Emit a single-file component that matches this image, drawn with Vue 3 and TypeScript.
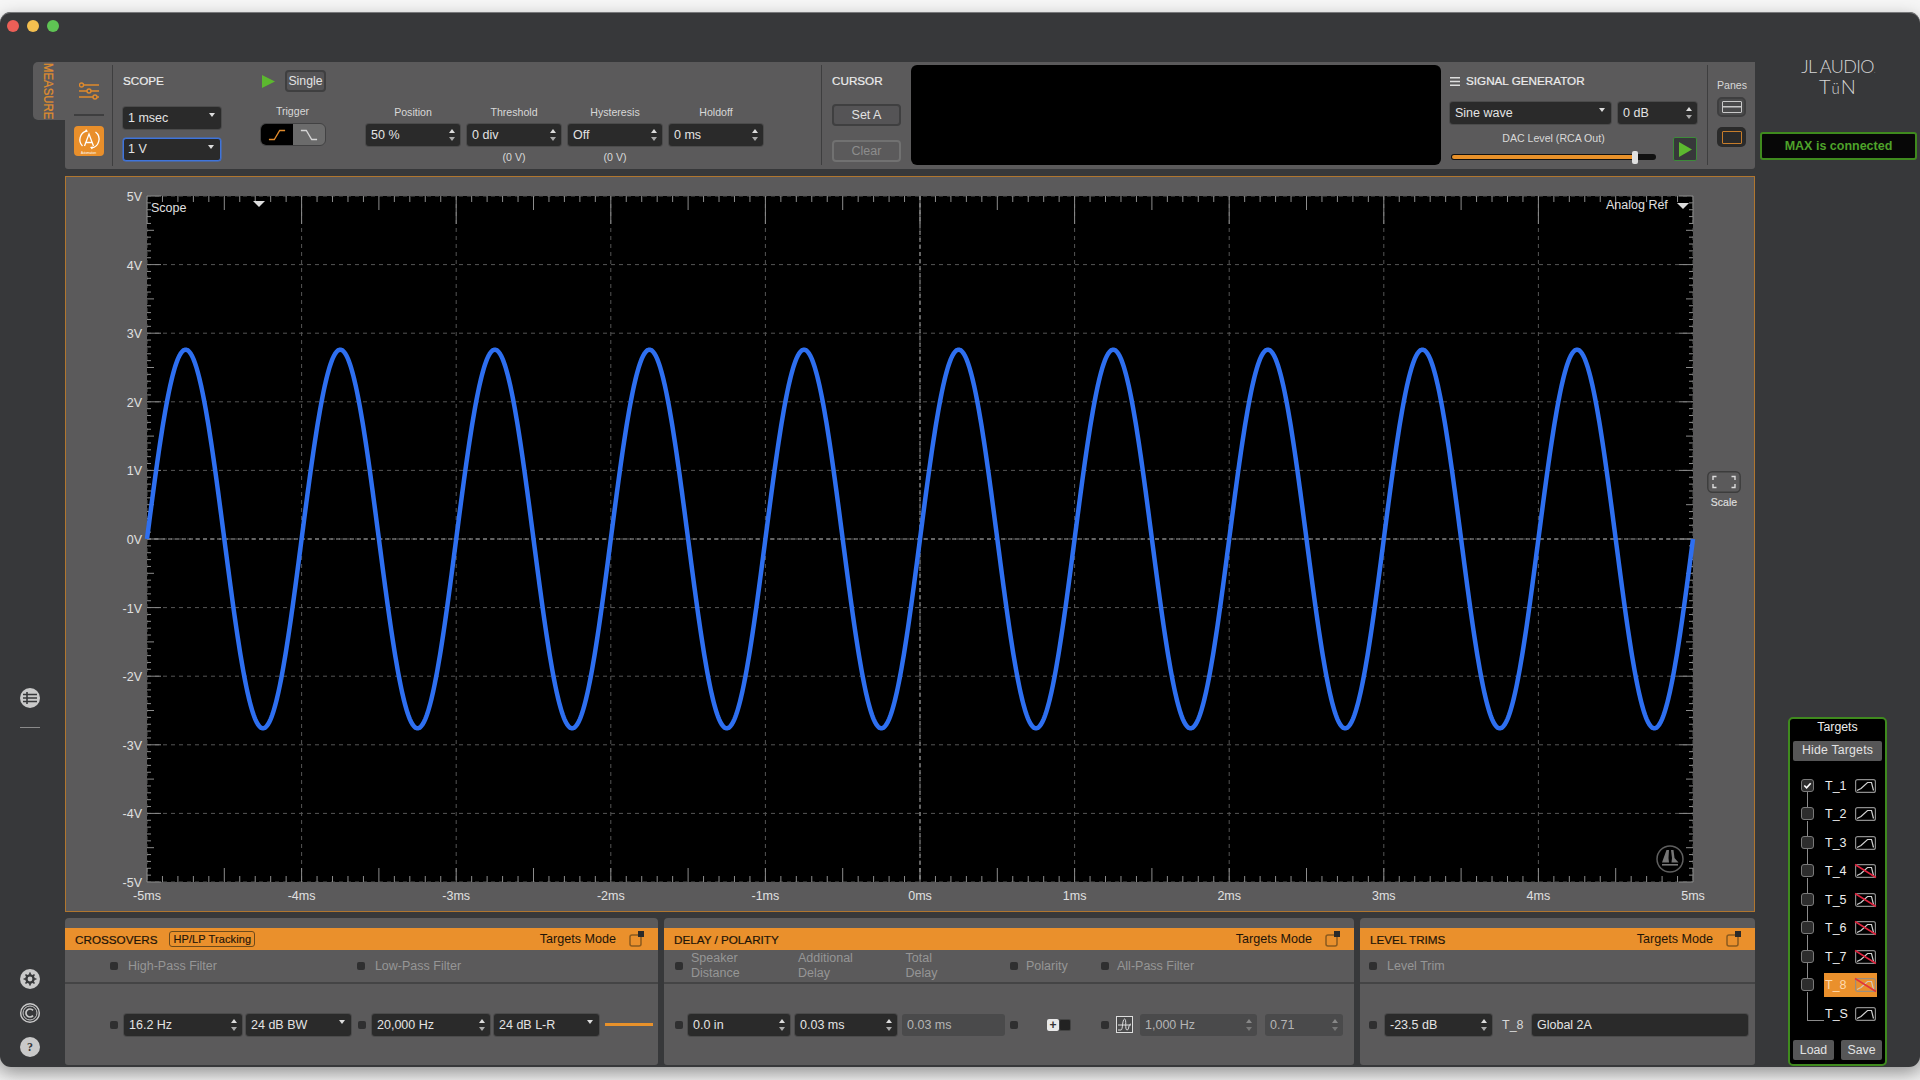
<script setup lang="ts">
const W = 1690, H = 736, PX = 82, PY = 20, PW = 1546, PH = 686
const xAt = (ms: number) => PX + ((ms + 5) / 10) * PW
const yAt = (v: number) => PY + ((5 - v) / 10) * PH
const range = (a: number, b: number) => Array.from({ length: b - a + 1 }, (_, i) => a + i)
const wave = range(0, 2000).map(i => {
  const ms = -5 + i / 200
  return `${i ? 'L' : 'M'}${xAt(ms).toFixed(2)} ${yAt(2.76 * Math.sin(2 * Math.PI * (ms + 5))).toFixed(2)}`
}).join('')
const msVals = range(-5, 5), vVals = range(-5, 5)
const xTicks = range(-50, 50).map(i => ({ x: xAt(i / 10), l: i % 10 === 0 ? 28 : i % 5 === 0 ? 14 : 6 }))
const yTicks = range(-50, 50).map(i => ({ y: yAt(i / 10), l: i % 10 === 0 ? 14 : i % 5 === 0 ? 7 : 4 }))
const targets = [
  { n: 'T_1', checked: true, off: false }, { n: 'T_2', off: false }, { n: 'T_3', off: false },
  { n: 'T_4', off: true }, { n: 'T_5', off: true }, { n: 'T_6', off: true }, { n: 'T_7', off: true },
  { n: 'T_8', off: true, active: true }
]
</script>

<template>
  <div class="page">
    <div class="window">
      <i class="light red"></i><i class="light yellow"></i><i class="light green"></i>
      <aside class="rail">
        <div class="tab"><span>MEASURE</span></div>
        <div class="rail-spacer"></div>
        <svg class="ric" viewBox="0 0 20 20"><circle cx="10" cy="10" r="10" fill="#c9c9c9"/><g stroke="#37383a" stroke-width="1.6"><path d="M3 6.5h14M3 10h14M3 13.5h14M7 4v12"/></g></svg>
        <div class="rail-sep"></div>
        <div class="rail-spacer2"></div>
        <svg class="ric" viewBox="0 0 20 20"><circle cx="10" cy="10" r="10" fill="#c9c9c9"/><circle cx="10" cy="10" r="3.6" fill="none" stroke="#37383a" stroke-width="2.4"/><g stroke="#37383a" stroke-width="1.7"><path d="M10 3.6v2.6M10 13.8v2.6M3.6 10h2.6M13.8 10h2.6M5.5 5.5l1.8 1.8M12.7 12.7l1.8 1.8M14.5 5.5l-1.8 1.8M7.3 12.7l-1.8 1.8"/></g></svg>
        <svg class="ric gap14" viewBox="0 0 20 20"><circle cx="10" cy="10" r="9.3" fill="none" stroke="#c9c9c9" stroke-width="1.4"/><circle cx="10" cy="10" r="7" fill="none" stroke="#c9c9c9" stroke-width="1"/><path d="M13 7.4a4 4 0 1 0 0 5.2" fill="none" stroke="#c9c9c9" stroke-width="1.7"/></svg>
        <div class="help">?</div>
      </aside>

      <main class="main">
        <section class="measure">
          <div class="m-icons">
            <svg class="sliders" viewBox="0 0 20 18" fill="none" stroke="#e08a2c" stroke-width="1.4"><path d="M5 3h15M0 9h8M12 9h8M0 15h14M18 15h2"/><circle cx="2.5" cy="3" r="2"/><circle cx="10" cy="9" r="2"/><circle cx="16" cy="15" r="2"/></svg>
            <div class="m-sep"></div>
            <div class="auto">
              <svg viewBox="0 0 30 30" fill="none" stroke="#fff" stroke-width="1.3"><path d="M8.5 20a9 9 0 0 1 4-15M21.5 6a9 9 0 0 1-4 16"/><path d="M10.5 20l4.5-12 4.5 12M12 16.5h6"/><path d="M12 3l2 2.5-3 .5zM18 23.5l-2-2.5 3-.5z" fill="#fff" stroke="none"/></svg>
              <em>Automation</em>
            </div>
          </div>
          <div class="scope-ctl">
            <div class="h-title">SCOPE</div>
            <div class="dd sel-a">1 msec<b class="caret"></b></div>
            <div class="dd sel-b">1 V<b class="caret"></b></div>
          </div>
          <div class="trigger-col">
            <div class="run-row">
              <svg class="play" viewBox="0 0 13 13"><path d="M0 0l13 6.5L0 13z" fill="#5cb82f"/></svg>
              <div class="btn single">Single</div>
            </div>
            <div class="lbl trig-l">Trigger</div>
            <div class="seg">
              <span class="seg-on"><svg viewBox="0 0 20 12" fill="none" stroke="#e08a2c" stroke-width="1.5"><path d="M1 11h6l6-10h6"/></svg></span>
              <span><svg viewBox="0 0 20 12" fill="none" stroke="#d5d5d5" stroke-width="1.5"><path d="M1 1h6l6 10h6"/></svg></span>
            </div>
          </div>
          <div class="fields">
            <div class="fld w94"><div class="lbl">Position</div><div class="dd">50 %<b class="spin"></b></div></div>
            <div class="fld w94"><div class="lbl">Threshold</div><div class="dd">0 div<b class="spin"></b></div><div class="lbl sub">(0 V)</div></div>
            <div class="fld w94"><div class="lbl">Hysteresis</div><div class="dd">Off<b class="spin"></b></div><div class="lbl sub">(0 V)</div></div>
            <div class="fld w94"><div class="lbl">Holdoff</div><div class="dd">0 ms<b class="spin"></b></div></div>
          </div>
          <div class="cursor">
            <div class="h-title">CURSOR</div>
            <div class="btn cur">Set A</div>
            <div class="btn cur dim">Clear</div>
          </div>
          <div class="screen"></div>
          <div class="gen">
            <div class="h-title gen-t"><svg viewBox="0 0 10 9" fill="#ddd"><path d="M0 0h10v1.6H0zM0 3.7h10v1.6H0zM0 7.4h10V9H0z"/></svg>SIGNAL GENERATOR</div>
            <div class="gen-row">
              <div class="dd gw1">Sine wave<b class="caret"></b></div>
              <div class="dd gw2">0 dB<b class="spin"></b></div>
            </div>
            <div class="gen-low">
              <div class="dac">
                <div class="lbl">DAC Level (RCA Out)</div>
                <div class="slider"><i class="fill"></i><i class="thumb"></i></div>
              </div>
              <div class="go"><svg viewBox="0 0 13 15"><path d="M0 0l13 7.5L0 15z" fill="#5cb82f"/></svg></div>
            </div>
          </div>
          <div class="panes">
            <div class="lbl">Panes</div>
            <div class="pane p1"><i></i></div>
            <div class="pane p2"><i></i></div>
          </div>
        </section>

        <section class="scope">
          <svg class="chart" :viewBox="`0 0 ${W} ${H}`">
            <rect :x="PX" :y="PY" :width="PW" :height="PH" fill="#000"/>
            <g stroke="#555" stroke-dasharray="4 4">
              <line v-for="m in msVals" :key="'g'+m" :x1="xAt(m)" :x2="xAt(m)" :y1="PY" :y2="PY+PH"/>
              <line v-for="v in vVals" :key="'h'+v" :x1="PX" :x2="PX+PW" :y1="yAt(v)" :y2="yAt(v)"/>
            </g>
            <g stroke="#a0a0a0" stroke-dasharray="4 3">
              <line :x1="xAt(0)" :x2="xAt(0)" :y1="PY" :y2="PY+PH"/>
              <line :x1="PX" :x2="PX+PW" :y1="yAt(0)" :y2="yAt(0)"/>
            </g>
            <g stroke="#8c8c8c">
              <template v-for="t in xTicks" :key="'x'+t.x">
                <line :x1="t.x" :x2="t.x" :y1="PY" :y2="PY+t.l"/>
                <line :x1="t.x" :x2="t.x" :y1="PY+PH" :y2="PY+PH-(t.l===28?14:t.l)"/>
              </template>
              <template v-for="t in yTicks" :key="'y'+t.y">
                <line :x1="PX" :x2="PX+t.l" :y1="t.y" :y2="t.y"/>
                <line :x1="PX+PW" :x2="PX+PW-t.l" :y1="t.y" :y2="t.y"/>
              </template>
            </g>
            <path :d="wave" fill="none" stroke="#2e6ff0" stroke-width="4.5" stroke-linejoin="round"/>
            <text v-for="v in vVals" :key="'yl'+v" class="ax" :x="PX-5" :y="yAt(v)+5" text-anchor="end">{{ v }}V</text>
            <text v-for="m in msVals" :key="'xl'+m" class="ax" :x="xAt(m)" y="724" text-anchor="middle">{{ m }}ms</text>
            <text class="ax" x="86" y="36">Scope</text>
            <path d="M188 25h12l-6 6z" fill="#ddd"/>
            <text class="ax" x="1541" y="33">Analog Ref</text>
            <path d="M1612 27h12l-6 6z" fill="#ddd"/>
            <g transform="translate(1605 683)">
              <circle r="13" fill="none" stroke="#5f5f5f" stroke-width="1.5"/>
              <path d="M-3.5-9h2.5l-.5 8 .5 4.5h-7zM1-9h2.5l1 8 4 4.5h-7l.5-4.5z" fill="#767676"/>
              <path d="M-8 5h16v1.6H-8z" fill="#767676"/>
            </g>
          </svg>
          <div class="scale">
            <svg viewBox="0 0 34 22" fill="none" stroke="#dcdcdc" stroke-width="1.4"><rect x=".8" y=".8" width="32.4" height="20.4" rx="4.5" stroke="#3c3c3c" stroke-width="1.4"/><path d="M6 9V5.5h3.5M24.5 5.5H28V9M28 13v3.5h-3.5M9.500 16.500H6V13"/></svg>
            <span>Scale</span>
          </div>
        </section>

        <section class="bottom">
          <div class="panel cross">
            <header class="ph"><span class="ph-t">CROSSOVERS</span><span class="badge">HP/LP Tracking</span><span class="tm">Targets Mode</span><svg class="tmi" viewBox="0 0 16 16" fill="none"><rect x="1" y="4" width="11" height="11" rx="2" stroke="#8a5a1e" stroke-width="1.5"/><rect x="9" y="0" width="6" height="6" fill="#2a2a2a"/></svg></header>
            <div class="labels l-cross">
              <span class="led"></span><span class="cap c1">High-Pass Filter</span>
              <span class="led"></span><span class="cap">Low-Pass Filter</span>
            </div>
            <div class="ctrls c-cross">
              <span class="led"></span><div class="dd w118">16.2 Hz<b class="spin"></b></div><div class="dd w105">24 dB BW<b class="caret"></b></div>
              <span class="led"></span><div class="dd w118">20,000 Hz<b class="spin"></b></div><div class="dd w105">24 dB L-R<b class="caret"></b></div>
              <i class="oline"></i>
            </div>
          </div>
          <div class="panel delay">
            <header class="ph"><span class="ph-t">DELAY / POLARITY</span><span class="tm">Targets Mode</span><svg class="tmi" viewBox="0 0 16 16" fill="none"><rect x="1" y="4" width="11" height="11" rx="2" stroke="#8a5a1e" stroke-width="1.5"/><rect x="9" y="0" width="6" height="6" fill="#2a2a2a"/></svg></header>
            <div class="labels l-delay">
              <span class="led"></span><span class="cap two d1">Speaker<br>Distance</span>
              <span class="cap two d2">Additional<br>Delay</span>
              <span class="cap two d3">Total<br>Delay</span>
              <span class="led"></span><span class="cap d4">Polarity</span>
              <span class="led"></span><span class="cap d5">All-Pass Filter</span>
            </div>
            <div class="ctrls c-delay">
              <span class="led"></span><div class="dd w102 first">0.0 in<b class="spin"></b></div><div class="dd w102">0.03 ms<b class="spin"></b></div><div class="dd w103 off">0.03 ms</div>
              <span class="led"></span>
              <div class="pol"><i class="pl">+</i><i class="pr"></i></div>
              <span class="led"></span>
              <div class="apf"><svg viewBox="0 0 15 15" fill="none" stroke="#ddd" stroke-width="1"><path d="M1 13h3c2 0 1-10 3.500-11 2.500 0 0 11 2.500 11s1-6 4-6M1 8h13"/></svg></div>
              <div class="dd w117 off">1,000 Hz<b class="spin"></b></div><div class="dd w78 off">0.71<b class="spin"></b></div>
            </div>
          </div>
          <div class="panel level">
            <header class="ph"><span class="ph-t">LEVEL TRIMS</span><span class="tm">Targets Mode</span><svg class="tmi" viewBox="0 0 16 16" fill="none"><rect x="1" y="4" width="11" height="11" rx="2" stroke="#8a5a1e" stroke-width="1.5"/><rect x="9" y="0" width="6" height="6" fill="#2a2a2a"/></svg></header>
            <div class="labels l-level"><span class="led"></span><span class="cap">Level Trim</span></div>
            <div class="ctrls c-level">
              <span class="led"></span><div class="dd w107">-23.5 dB<b class="spin"></b></div>
              <span class="t8">T_8</span><div class="dd w216">Global 2A</div>
            </div>
          </div>
        </section>
      </main>

      <aside class="right">
        <div class="logo"><div class="jl">JL AUDIO<small>.</small></div><div class="ton">T<small>ü</small>N</div></div>
        <div class="conn">MAX is connected</div>
        <div class="targets">
          <div class="t-title">Targets</div>
          <div class="btn hide">Hide Targets</div>
          <div class="t-list">
            <div v-for="(t, i) in targets" :key="t.n" class="t-row" :class="{ act: t.active }">
              <span class="chk">
                <svg v-if="t.checked" viewBox="0 0 12 12" fill="none" stroke="#fff" stroke-width="1.8"><path d="M2.500 6l2.500 2.500 4.500-5"/></svg>
              </span>
              <i v-if="i < 7" class="link"></i>
              <i v-else class="elbow"></i>
              <span class="t-main">
                <span class="t-name">{{ t.n }}</span>
                <svg class="curve" viewBox="0 0 21 14" fill="none"><rect x=".6" y=".6" width="19.800" height="12.800" rx="2" stroke="#8d8d8d" stroke-width="1.2"/><path d="M2 11.500l4-2 6.500-6h4l2 8" stroke="#d0d0d0" stroke-width="1.2"/><path v-if="t.off" d="M0 .5l21 13" stroke="#e0243f" stroke-width="1.500"/></svg>
              </span>
            </div>
            <div class="t-row ts">
              <span class="t-main">
                <span class="t-name">T_S</span>
                <svg class="curve" viewBox="0 0 21 14" fill="none"><rect x=".6" y=".6" width="19.800" height="12.800" rx="2" stroke="#8d8d8d" stroke-width="1.2"/><path d="M2 11.500l4-2 6.500-6h4l2 8" stroke="#d0d0d0" stroke-width="1.2"/></svg>
              </span>
            </div>
          </div>
          <div class="t-btns"><div class="btn">Load</div><div class="btn">Save</div></div>
        </div>
      </aside>
    </div>
  </div>
</template>

<style>
html, body { margin: 0; background: #f4f4f4; }
</style>

<style scoped>
.page { width: 1920px; height: 1080px; overflow: hidden; background: linear-gradient(#f6f6f6 0 50%, #dcdcdc 98%, #f0f0f0); font-family: "Liberation Sans", Arial, sans-serif; font-size: 12.5px; color: #e2e2e2; padding-top: 12px; box-sizing: border-box; }
.window { position: relative; width: 1920px; height: 1055px; background: #37383a; border-radius: 11px; box-shadow: inset 0 1px 0 #77787a, 0 6px 18px rgba(0,0,0,.35); display: flex; padding-top: 50px; box-sizing: border-box; }
.light { position: absolute; top: 8px; width: 12px; height: 12px; border-radius: 50%; }
.red { left: 7px; background: #ec5f57; } .yellow { left: 27px; background: #f4bf4f; } .green { left: 47px; background: #5fc454; }
.rail { width: 65px; flex: none; display: flex; flex-direction: column; align-items: flex-start; }
.tab { margin-left: 33px; width: 32px; height: 58px; background: #5b5a5b; border-radius: 5px 0 0 5px; box-sizing: border-box; padding: 1px 0 0 9px; }
.tab span { writing-mode: vertical-rl; color: #e08e2e; font-size: 11.4px; line-height: 11px; display: block; white-space: nowrap; transform: scaleX(1.2); transform-origin: left top; -webkit-text-stroke: .2px #e08e2e; }
.rail-spacer { height: 568px; }
.ric { width: 20px; height: 20px; margin-left: 20px; display: block; flex: none; }
.rail-sep { width: 20px; height: 1px; background: #8a8a8a; margin: 19px 0 0 20px; }
.rail-spacer2 { height: 241px; }
.gap14 { margin-top: 14px; }
.help { width: 20px; height: 20px; border-radius: 50%; background: #c9c9c9; color: #37383a; font: bold 12px/20px "Liberation Serif", serif; text-align: center; margin: 14px 0 0 20px; }
.main { width: 1690px; flex: none; display: flex; flex-direction: column; }
.measure { height: 107px; background: #5b5a5b; display: flex; position: relative; border-radius: 0 0 3px 3px; flex: none; }
.m-icons { width: 48px; margin-top: 3px; margin-bottom: 3px; height: 101px; border-right: 1px solid #3e3e3f; flex: none; display: flex; flex-direction: column; align-items: center; padding-top: 17px; box-sizing: border-box; }
.sliders { width: 20px; height: 18px; }
.m-sep { width: 30px; height: 2px; background: #3e3e3f; margin: 14px 0 10px; }
.auto { width: 30px; height: 30px; background: #e98f2b; border-radius: 4px; position: relative; }
.auto svg { width: 30px; height: 30px; display: block; }
.auto em { position: absolute; left: 0; right: 0; bottom: 1px; text-align: center; font: 3px "Liberation Sans", sans-serif; color: #fff; }
.scope-ctl { width: 98px; margin-left: 10px; flex: none; padding-top: 12px; }
.h-title { font-size: 11.7px; color: #ececec; line-height: 14px; white-space: nowrap; -webkit-text-stroke: .2px #ececec; }
.dd { position: relative; height: 22px; background: #2a2a2a; border-radius: 3px; color: #e4e4e4; line-height: 22px; padding-left: 5px; box-sizing: border-box; font-size: 12.5px; flex: none; white-space: nowrap; box-shadow: 0 0 0 1px rgba(60,60,60,.5); }
.sel-a { margin-top: 19px; }
.sel-b { margin-top: 9px; height: 23px; border: 1px solid #3f74dc; padding-left: 4px; line-height: 21px; box-shadow: 0 0 0 .5px #3f74dc; }
.caret { position: absolute; right: 6px; top: 6px; width: 0; height: 0; border: 3.5px solid transparent; border-top: 4px solid #ddd; border-bottom: 0; }
.spin { position: absolute; right: 5px; top: 5px; width: 6px; height: 12px; }
.spin::before, .spin::after { content: ""; position: absolute; left: 0; border: 3px solid transparent; }
.spin::before { top: 0; border-bottom: 4px solid #ddd; border-top: 0; }
.spin::after { bottom: 0; border-top: 4px solid #aaa; border-bottom: 0; }
.trigger-col { width: 66px; margin-left: 39px; flex: none; padding-top: 8px; }
.run-row { display: flex; align-items: center; height: 22px; }
.play { width: 13px; height: 13px; margin: 0 10px 0 2px; }
.btn { background: #555456; border: 1px solid #3f3f40; border-radius: 4px; text-align: center; box-sizing: border-box; color: #e2e2e2; }
.single { width: 41px; height: 22px; line-height: 18px; border-width: 2px; font-size: 12.3px; }
.lbl { font-size: 10.6px; color: #d8d8d8; text-align: center; line-height: 13px; white-space: nowrap; }
.trig-l { margin-top: 13px; margin-left: -1px; }
.seg { margin-top: 5px; width: 66px; height: 23px; display: flex; border: 1px solid #424243; border-radius: 6px; overflow: hidden; box-sizing: border-box; background: #6b6b6b; }
.seg span { flex: 1; display: flex; align-items: center; justify-content: center; }
.seg svg { width: 18px; height: 12px; }
.seg-on { background: #000; }
.fields { display: flex; gap: 7px; margin-left: 40px; padding-top: 44px; flex: none; }
.fld.w94 { width: 94px; }
.fld .dd { margin-top: 5px; }
.sub { margin-top: 5px; }
.cursor { margin-left: 58px; width: 69px; flex: none; border-left: 1px solid #3e3e3f; padding-left: 10px; margin-top: 3px; height: 91px; padding-top: 9px; box-sizing: content-box; }
.cur { width: 69px; height: 22px; line-height: 18px; border-width: 2px; margin-top: 16px; }
.cursor .cur + .cur { margin-top: 14px; }
.dim { color: #8d8d8d; border-color: #717171; background: #5b5a5b; }
.screen { width: 530px; height: 100px; background: #000; border-radius: 6px; margin: 3px 0 0 10px; flex: none; }
.gen { width: 247px; margin-left: 9px; flex: none; padding-top: 12px; }
.gen-t { display: flex; align-items: center; gap: 6px; }
.gen-t svg { width: 10px; height: 9px; }
.gen-row { display: flex; gap: 7px; margin-top: 14px; }
.gw1 { width: 161px; } .gw2 { width: 79px; }
.gen-low { display: flex; margin-top: 8px; }
.dac { width: 205px; margin-left: 1px; }
.slider { position: relative; height: 6px; margin-top: 9px; background: #111; border-radius: 3px; }
.fill { position: absolute; left: 1px; top: 1px; bottom: 1px; width: 183px; background: #e8912a; border-radius: 2px; }
.thumb { position: absolute; left: 181px; top: -3px; width: 6px; height: 13px; background: #e0e0e0; border-radius: 2px; }
.go { width: 24px; height: 24px; margin-left: 17px; margin-top: 5px; background: #37383a; border: 1px solid #3d8a3a; border-radius: 2px; box-sizing: border-box; display: flex; align-items: center; justify-content: center; }
.go svg { width: 13px; height: 15px; }
.panes { margin-left: 10px; margin-top: 3px; height: 86px; width: 38px; border-left: 1px solid #3e3e3f; padding-left: 9px; flex: none; padding-top: 14px; box-sizing: content-box; }
.panes .lbl { width: 29px; }
.pane { width: 29px; height: 20px; border-radius: 5px; box-sizing: border-box; display: flex; align-items: center; justify-content: center; }
.p1 { margin-top: 5px; background: #4a4a4b; border: 2px solid #3e3e3f; }
.p1 i { width: 20px; height: 12px; box-sizing: border-box; border: 1.5px solid #c8c8c8; border-radius: 1px; background: linear-gradient(#c8c8c8,#c8c8c8) 0 50%/100% 1.5px no-repeat; }
.p2 { margin-top: 10px; background: #2a2a2a; }
.p2 i { width: 20px; height: 13px; box-sizing: border-box; border: 1.5px solid #c67c2a; border-radius: 1px; }
.scope { height: 736px; margin-top: 7px; flex: none; background: #5b5a5b; box-shadow: inset 0 0 0 1px #b0762f; position: relative; }
.chart { width: 1690px; height: 736px; display: block; }
.ax { font: 12.5px "Liberation Sans", Arial, sans-serif; fill: #e0e0e0; }
.scale { position: absolute; left: 1642px; top: 295px; width: 34px; text-align: center; }
.scale svg { width: 34px; height: 22px; display: block; }
.scale span { display: block; font-size: 10.5px; color: #ddd; margin-top: 3px; -webkit-text-stroke: .2px #ddd; }
.bottom { display: flex; gap: 6px; margin-top: 6px; height: 147px; flex: none; }
.panel { background: #5b5a5b; border-radius: 4px 4px 3px 3px; padding-top: 10px; box-sizing: border-box; }
.cross { width: 593px; } .delay { width: 690px; } .level { width: 395px; }
.ph { height: 22px; background: #ea902c; color: #1e1408; display: flex; align-items: center; padding-left: 10px; position: relative; font-size: 12.6px; }
.ph-t { white-space: nowrap; font-size: 11.7px; -webkit-text-stroke: .2px #1e1408; }
.badge { margin-left: 12px; border: 1px solid #6d4a1b; border-radius: 3px; font-size: 11px; padding: 0 3px; height: 16px; line-height: 14px; box-sizing: border-box; letter-spacing: .1px; -webkit-text-stroke: .15px #1e1408; }
.tm { margin-left: auto; white-space: nowrap; }
.tmi { width: 16px; height: 16px; margin: 0 13px 0 13px; }
.labels { height: 32px; border-bottom: 2px solid #444445; position: relative; display: flex; align-items: center; box-sizing: content-box; }
.led { width: 8px; height: 8px; border-radius: 2px; background: #2f2f30; flex: none; }
.cap { color: #969696; font-size: 12.500px; white-space: nowrap; margin-left: 10px; }
.two { line-height: 15px; }
.l-cross { padding-left: 45px; } .c1 { margin-right: 140px; }
.l-delay { padding-left: 11px; }
.d1 { width: 107px; margin-left: 8px; } .d2 { width: 107.500px; margin-left: 0; } .d3 { width: 104.500px; margin-left: 0; } .d4 { width: 75px; margin-left: 8px; } .d5 { margin-left: 8px; }
.l-level { padding-left: 9px; }
.ctrls { height: 81px; display: flex; align-items: center; }
.c-cross { padding-left: 45px; }
.c-cross .led { margin-right: 2px; }
.w118 { width: 118px; margin-left: 4px; margin-right: 4px; }
.w105 { width: 105px; margin-right: 7px; }
.oline { width: 48px; height: 3px; background: #e8912a; margin-left: -1px; }
.c-delay { padding-left: 11px; }
.w102 { width: 102px; margin-right: 5px; }
.first { margin-left: 5px; }
.w103 { width: 103px; margin-right: 5px; }
.off { background: #4a4a4b; color: #b5b5b5; box-shadow: none; }
.off .spin::before { border-bottom-color: #888; } .off .spin::after { border-top-color: #777; }
.pol { width: 24px; height: 12px; margin: 0 30px 0 29px; display: flex; background: #444; border-radius: 2px; flex: none; }
.pl { width: 12px; background: #e8e8e8; color: #333; font: bold 12px/12px "Liberation Sans", sans-serif; text-align: center; border-radius: 2px; }
.pr { width: 10px; margin: 1px; background: #222; border-radius: 1px; }
.apf { width: 17px; height: 17px; margin-left: 7px; margin-right: 7px; border: 1px solid #ddd; background: #4a4a4b; box-sizing: border-box; flex: none; }
.apf svg { width: 15px; height: 15px; display: block; }
.w117 { width: 117px; margin-right: 8px; } .w78 { width: 78px; }
.c-level { padding-left: 9px; }
.w107 { width: 107px; margin-left: 8px; }
.t8 { margin-left: 10px; width: 30px; color: #d8d8d8; }
.w216 { width: 216px; }
.right { width: 165px; flex: none; display: flex; flex-direction: column; }
.logo { text-align: center; height: 70px; margin-left: 1px; color: #d6d6d6; }
.jl { height: 20px; font: 300 18px/20px "Lato", "Liberation Sans", sans-serif; letter-spacing: -.6px; margin-top: -6px; white-space: nowrap; }
.jl small { font-size: 6px; }
.ton { height: 20px; font: 300 20px/20px "Lato", sans-serif; letter-spacing: 1px; white-space: nowrap; }
.ton small { font-size: 15px; }
.conn { margin-left: 5px; width: 157px; height: 28px; box-sizing: border-box; background: #070707; border: 2px solid #3f8a1e; border-radius: 3px; color: #4ea22a; text-align: center; line-height: 24px; font-weight: bold; font-size: 12.5px; }
.targets { margin: 557px 0 0 33px; width: 99px; height: 349px; box-sizing: border-box; background: #000; border: 2px solid #3f8a1e; border-radius: 5px; padding: 0 3px; display: flex; flex-direction: column; }
.t-title { text-align: center; font-size: 12.3px; line-height: 16px; color: #ececec; }
.hide { height: 20px; line-height: 19px; border: 0; margin-top: 6px; font-size: 12.3px; border-radius: 2px; background: #565657; letter-spacing: .2px; flex: none; }
.t-list { margin-top: 10px; height: 260px; position: relative; flex: none; }
.t-row { height: 28.5px; position: relative; }
.chk { position: absolute; left: 8px; top: 7.5px; width: 13px; height: 13px; border: 1px solid #7a7a7a; background: #2d2d2d; border-radius: 3px; box-sizing: border-box; }
.chk svg { width: 11px; height: 11px; display: block; }
.link { position: absolute; left: 14px; top: 21px; height: 15px; width: 1px; background: #8a8a8a; }
.elbow { position: absolute; left: 14px; top: 21px; height: 29px; width: 17px; box-sizing: border-box; border-left: 1px solid #8a8a8a; border-bottom: 1px solid #8a8a8a; }
.t-main { position: absolute; left: 31px; top: 2.5px; width: 53px; height: 24px; display: flex; align-items: center; color: #eee; font-size: 12.5px; }
.t-name { width: 31px; padding-left: 1px; box-sizing: border-box; }
.curve { width: 21px; height: 14px; flex: none; overflow: visible; }
.act .t-main { background: #ea902c; color: #ffd9ad; }
.act .curve { opacity: .85; }
.t-btns { display: flex; justify-content: space-between; margin-top: auto; margin-bottom: 4px; }
.t-btns .btn { width: 41px; height: 20px; line-height: 20px; border: 0; border-radius: 2px; font-size: 12.3px; background: #565657; }
</style>
